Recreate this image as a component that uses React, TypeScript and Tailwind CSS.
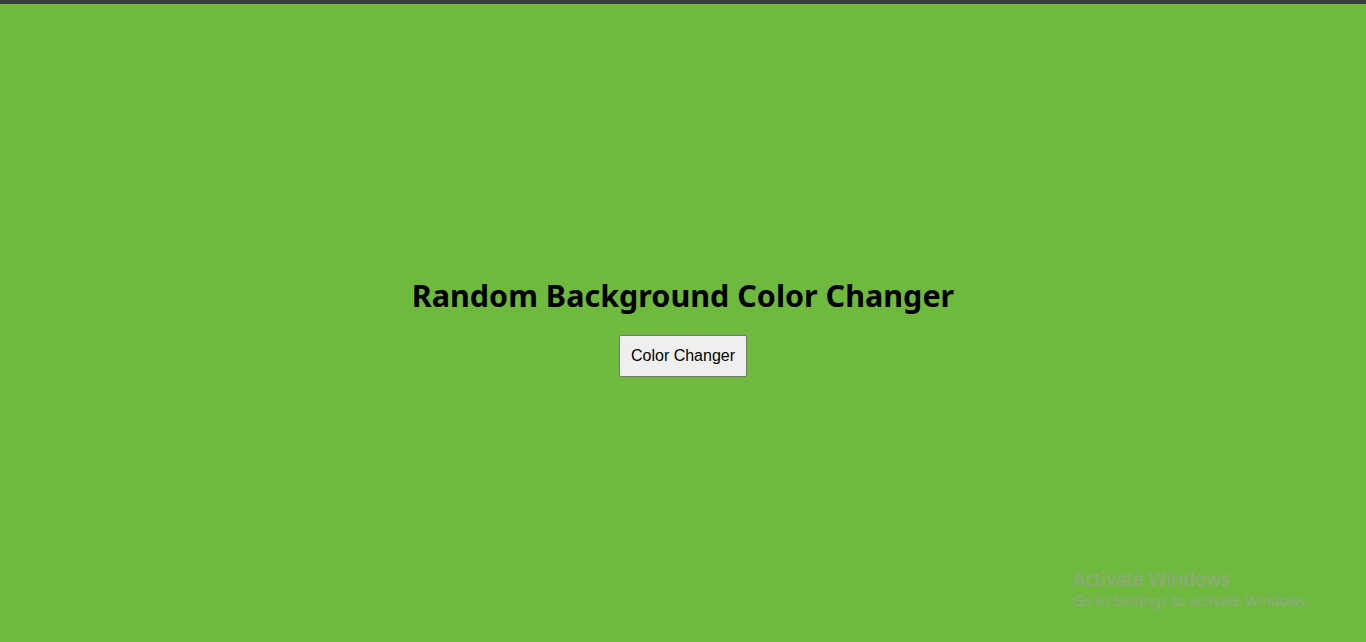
import React, { useState } from 'react';

const colors = ['#70b93f', '#3f8cb9', '#b93f6e', '#b9a23f', '#6e3fb9'];

export default function App() {
  const [color, setColor] = useState('#70b93f');

  const changeColor = () => {
    const next = colors[Math.floor(Math.random() * colors.length)];
    setColor(next);
  };

  return (
    <div className="relative h-screen w-full overflow-hidden border-t-4 border-[#3c3c3c]" style={{ backgroundColor: color }}>
      <div className="flex h-full flex-col items-center justify-center pt-[7px]">
        <h1 className="text-[30.5px] font-bold leading-tight text-black [font-family:'Noto_Sans',sans-serif]">
          Random Background Color Changer
        </h1>
        <button
          onClick={changeColor}
          className="mt-[21px] h-[42px] w-[128px] rounded-[2px] border border-[#767676] bg-[#efefef] text-[16px] text-black [font-family:'Liberation_Sans',Arial,sans-serif]"
        >
          Color Changer
        </button>
      </div>

      {/* windows watermark */}
      <div className="pointer-events-none absolute left-[1073px] top-[563px] text-[#93a886] [font-family:'Noto_Sans',sans-serif]">
        <div className="text-[19px] leading-[24px]">Activate Windows</div>
        <div className="text-[14.3px] leading-[20px]">Go to Settings to activate Windows.</div>
      </div>
    </div>
  );
}
